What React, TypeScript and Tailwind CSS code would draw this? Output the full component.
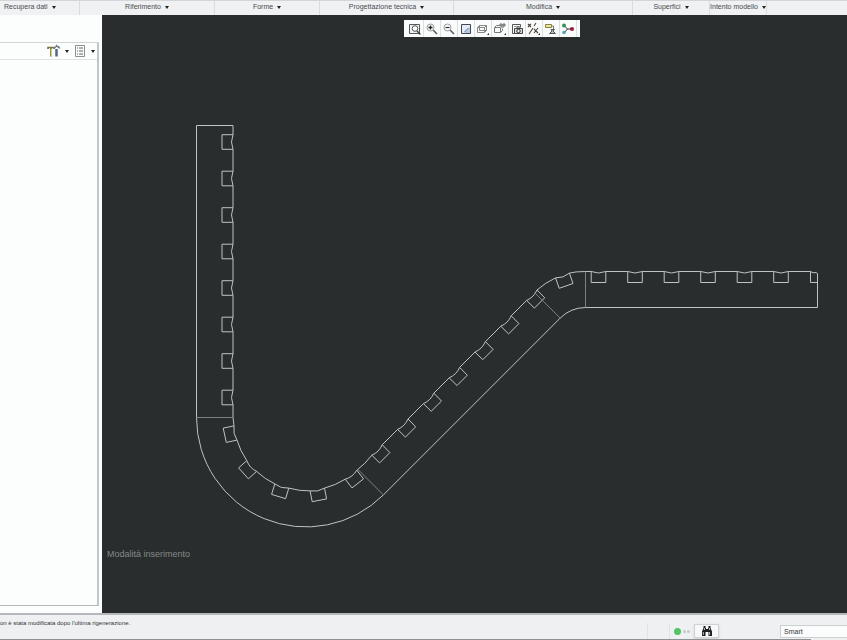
import type { ReactNode } from 'react';

const ribbonGroups = [
  { label: 'Recupera dati', width: 'w-20 justify-start pl-1' },
  { label: 'Riferimento', width: 'w-[135px] justify-center' },
  { label: 'Forme', width: 'w-[105px] justify-center' },
  { label: 'Progettazione tecnica', width: 'w-[134px] justify-center' },
  { label: 'Modifica', width: 'w-[179px] justify-center' },
  { label: 'Superfici', width: 'w-[77px] justify-center' },
  { label: 'Intento modello', width: 'w-[57px] justify-center' },
];

const Caret = () => (
  <svg viewBox="0 0 4 3" className="h-[3px] w-1 shrink-0" fill="#222">
    <path d="M0 0h4L2 3z" />
  </svg>
);

const Icon = ({ children }: { children: ReactNode }) => (
  <svg viewBox="0 0 14 14" className="h-[14px] w-[14px]" fill="none" stroke="#555a5e" strokeWidth="1">
    {children}
  </svg>
);

const viewTools = [
  {
    label: 'Adatta',
    icon: (
      <>
        <path d="M1.5 2.5h10v9h-10z" fill="#eef0f1" />
        <circle cx="7" cy="6.5" r="2.8" fill="#fff" stroke="#555" />
        <path d="M9 9l3.5 3.5" stroke="#444" strokeWidth="1.5" />
      </>
    ),
  },
  {
    label: 'Zoom avanti',
    icon: (
      <>
        <circle cx="5.5" cy="5.5" r="3.5" stroke="#999" />
        <path d="M3.5 5.5h4M5.5 3.5v4" stroke="#222" strokeWidth="1.3" />
        <path d="M8.3 8.3l3.7 3.7" stroke="#555" strokeWidth="1.5" />
      </>
    ),
  },
  {
    label: 'Zoom indietro',
    icon: (
      <>
        <circle cx="5.5" cy="5.5" r="3.5" stroke="#999" />
        <path d="M3.5 5.5h4" stroke="#333" strokeWidth="1.2" />
        <path d="M8.3 8.3l3.7 3.7" stroke="#555" strokeWidth="1.5" />
      </>
    ),
  },
  {
    label: 'Ridisegna',
    icon: (
      <>
        <path d="M2.5 2.5h9v9h-9z" fill="#e3ebf7" stroke="#44494f" />
        <path d="M11 5v6H5z" fill="#b9c7e2" stroke="none" />
        <path d="M5.5 10l4-4" stroke="#6072a0" />
      </>
    ),
  },
  {
    label: 'Stile di visualizzazione',
    icon: (
      <>
        <path d="M1.5 5.5h7v5h-7zM3.5 3.5h7v5h-7zM1.5 5.5l2-2M8.5 5.5l2-2M8.5 10.5l2-2" stroke="#888" />
        <path d="M13 11v2h-2z" fill="#222" stroke="none" />
      </>
    ),
  },
  {
    label: 'Orientamenti salvati',
    icon: (
      <>
        <path d="M1.5 5.5h6v5h-6zM1.5 5.5l2-2h3M7.5 10.5l2-2v-2" stroke="#777" />
        <path d="M7 2h2v2h-2zM10 2h2v2h-2zM8 5h3" stroke="#444" strokeWidth=".8" />
        <path d="M13 11v2h-2z" fill="#222" stroke="none" />
      </>
    ),
  },
  {
    label: 'Gestione viste',
    icon: (
      <>
        <path d="M5 11.5H2.5v-9h8V5" stroke="#555" />
        <path d="M4 4.5h5" stroke="#999" />
        <path d="M4.5 6.5h8v5h-8z" fill="#ddd" stroke="#444" />
        <circle cx="8.5" cy="9" r="1.7" fill="#fff" stroke="#222" />
        <path d="M7 6V5h3v1" />
      </>
    ),
  },
  {
    label: 'Filtri riferimenti',
    icon: (
      <>
        <path d="M1 2l3 3M4 2L1 5M9 1L7 4M6 6L2 12M7 7l4 4M11 6l-4 5" stroke="#4c463c" strokeWidth="1.1" />
        <path d="M13 11v2h-2z" fill="#222" stroke="none" />
      </>
    ),
  },
  {
    label: 'Annotazioni',
    icon: (
      <>
        <path d="M1.5 2.5h6v3h-6z" fill="#f3e886" stroke="#85804d" />
        <path d="M7.5 4h2v3" stroke="#777" />
        <path d="M7 7.5h3.5L9 9l2.5 2.5h-6L8 9z" fill="#bbb" stroke="#555" />
      </>
    ),
  },
  {
    label: 'Centro di rotazione',
    icon: (
      <>
        <path d="M3 3.5l3.5 3.5L3 11M6.5 7H11" stroke="#333" />
        <circle cx="3" cy="3.5" r="2" fill="#3c8f55" stroke="none" />
        <circle cx="3" cy="10.5" r="1.8" fill="#5aa3b8" stroke="none" />
        <circle cx="11" cy="7" r="2.1" fill="#9c1f3f" stroke="none" />
      </>
    ),
  },
];

// Teeth of the rack: centre of the mouth and direction of travel in degrees
type Tooth = { x: number; y: number; angle: number };

const teeth: Tooth[] = [
  ...Array.from({ length: 8 }, (_, i) => ({ x: 233, y: 142 + i * 36.5, angle: 90 })),
  { x: 235.5, y: 433, angle: 78 },
  { x: 251.7, y: 466, angle: 48 },
  { x: 281.8, y: 486, angle: 17 },
  { x: 317.3, y: 489.5, angle: -11 },
  { x: 351, y: 474.7, angle: -38 },
  ...Array.from({ length: 7 }, (_, i) => ({ x: 377 + i * 25.8, y: 450 - i * 25.8, angle: -45 })),
  { x: 562.5, y: 275.5, angle: -19 },
  ...Array.from({ length: 6 }, (_, i) => ({ x: 598.5 + i * 36.5, y: 271.5, angle: 0 })),
];

const place = (t: Tooth, u: number, v: number) => {
  const a = (t.angle * Math.PI) / 180;
  const x = t.x + u * Math.cos(a) - v * Math.sin(a);
  const y = t.y + u * Math.sin(a) + v * Math.cos(a);
  return `${x.toFixed(1)} ${y.toFixed(1)}`;
};

// Line from the previous tooth, flat on straights and bulging on the bends
const link = (t: Tooth, prev?: Tooth) => {
  const end = place(t, -7.3, 0);
  if (!prev || prev.angle === t.angle) return `L${end}`;
  if (prev.angle === 90) return `V417.5L${end}`;
  if (t.angle === 0) return `Q575 271.5 586 271.5L${end}`;
  return prev.angle > t.angle ? `A73 73 0 0 0 ${end}` : `A73 73 0 0 1 ${end}`;
};

const profile = teeth
  .map((t, i) => `${link(t, teeth[i - 1])}Q${place(t, 0, 3)} ${place(t, 7.3, 0)}`)
  .join('');

const pockets = teeth
  .map((t) => `M${place(t, -7.3, 0)}L${place(t, -7.3, 11)}L${place(t, 7.3, 11)}L${place(t, 7.3, 0)}`)
  .join('');

const Drawing = () => (
  <svg
    viewBox="102 15 745 598"
    preserveAspectRatio="xMinYMin meet"
    className="absolute inset-0 h-full w-full"
    fill="none"
    stroke="#bfc3c1"
    strokeWidth="1"
  >
    <path d="M233 125.5H196.5V417.5A109.5 109.5 0 0 0 383.4 494.9L560.2 318.1A36.5 36.5 0 0 1 586 307.5H817.5V273.5L816 272.5Q813 273.5 810.5 271.5" />
    <path d={`M233 125.5${profile}H810.5`} />
    <path d={pockets} />
    <path d="M810.5 271.5V282.5H817.5" />
    <path
      d="M196.5 417.5H233M357.5 469L383.4 494.9M534.5 292.5L560.2 318.1M585.5 271.5V307.5"
      stroke="#7d8180"
    />
  </svg>
);

const Ribbon = () => (
  <header className="flex h-[15px] shrink-0 items-stretch border-t border-[#d3d5d8] bg-[#eff1f3]">
    {ribbonGroups.map((group) => (
      <button
        key={group.label}
        className={`${group.width} flex shrink-0 items-center gap-1 border-r border-[#d9dcdf] pb-[2px] text-[7px] leading-[12px] whitespace-nowrap text-[#484c50]`}
      >
        {group.label}
        <Caret />
      </button>
    ))}
  </header>
);

const Sidebar = () => (
  <aside className="flex w-[102px] shrink-0 flex-col bg-[#fcfdfd] pt-[27px] pr-[3px] pb-[7px]">
    <div className="flex flex-1 flex-col border-t border-r-2 border-b border-t-[#d2d5d6] border-r-[#c3c6c9] border-b-[#b4b7b9]">
      <div className="flex h-[17px] items-center justify-end gap-1 border-b border-[#e0e2e3] pr-[2px]">
        <button aria-label="Impostazioni" className="flex items-center gap-1">
          <Icon>
            <path d="M1 5V3.500h6V5M4 4V12.500" stroke="#77763f" strokeWidth="1.600" />
            <path d="M4.500 5v7" stroke="#d6d06a" />
            <path d="M9.500 5v7.500" stroke="#52658a" strokeWidth="2.500" />
            <path d="M7 4.500L9 2.500h2.500l1.500 2M9 1l3 3" stroke="#6d7988" strokeWidth="1.200" />
          </Icon>
          <Caret />
        </button>
        <button aria-label="Mostra" className="flex items-center gap-1">
          <Icon>
            <path d="M2.500 1.500h9v11h-9z" fill="#fafafa" stroke="#8b8f93" />
            <path d="M4 4h1M6 4h4M4 7h1M6 7h4M4 10h1M6 10h4" stroke="#666" />
          </Icon>
          <Caret />
        </button>
      </div>
    </div>
  </aside>
);

const Viewport = () => (
  <main className="relative flex-1 bg-[#292d2e]">
    <Drawing />
    <div className="absolute top-[5px] left-[302px] flex h-[17px] bg-[#fafbfb] px-[3px]">
      {viewTools.map((tool) => (
        <button
          key={tool.label}
          aria-label={tool.label}
          className="flex w-[17px] items-center justify-center border-r border-[#dde0e2]"
        >
          <Icon>{tool.icon}</Icon>
        </button>
      ))}
    </div>
    <p className="absolute bottom-[53px] left-[5px] text-[9px] leading-3 text-[#858988]">Modalità inserimento</p>
  </main>
);

const StatusBar = () => (
  <footer className="flex h-[27px] shrink-0 flex-col border-t-2 border-[#b5b8ba] bg-[#eef0f2]">
    <div className="flex flex-1 items-start">
      <p className="flex-1 overflow-hidden pt-1 text-[6px] leading-[8px] whitespace-nowrap text-[#303438]">
        on è stata modificata dopo l'ultima rigenerazione.
      </p>
      <div className="flex h-full items-end">
        <div className="mr-1 flex h-4 w-[23px] items-center border-x border-[#e0e2e4]" />
        <div className="flex h-4 w-5 items-center gap-px">
          <span className="h-[7px] w-[7px] rounded-full bg-[#52c465]" />
          <span className="ml-px h-[3px] w-[3px] rounded-full bg-[#c5c8ca]" />
          <span className="h-[3px] w-[3px] rounded-full bg-[#c5c8ca]" />
        </div>
        <button
          aria-label="Cerca"
          className="mb-px flex h-[14px] w-[25px] items-center justify-center border border-[#cfd2d4] bg-[#f7f8f8] shadow-sm"
        >
          <svg viewBox="0 0 12 12" className="h-3 w-3" fill="#1c1f21">
            <path d="M2.5 1h2v2h.5v1h2V3h.5V1h2v2l1.500 3.500V11h-3.500V7h-3v4H1V6.500L2.500 3z" />
            <path d="M2.300 7v3M8.600 7v3M3.500 3v2M8.500 3v2" stroke="#fff" strokeWidth=".7" />
          </svg>
        </button>
        <select
          aria-label="Filtro di selezione"
          defaultValue="Smart"
          className="mb-px ml-[61px] h-[13px] w-[67px] appearance-none border border-r-0 border-[#cdd0d2] bg-[#fbfcfc] pl-[3px] text-[7px] leading-[10px] text-[#33373b]"
        >
          <option>Smart</option>
        </select>
      </div>
    </div>
    <div className="mr-9 h-px bg-[#8f9294]" />
  </footer>
);

export default function App() {
  return (
    <div className="flex h-screen flex-col overflow-hidden bg-[#eef0f2] font-['Liberation_Sans',sans-serif]">
      <Ribbon />
      <div className="flex min-h-0 flex-1">
        <Sidebar />
        <Viewport />
      </div>
      <StatusBar />
    </div>
  );
}
